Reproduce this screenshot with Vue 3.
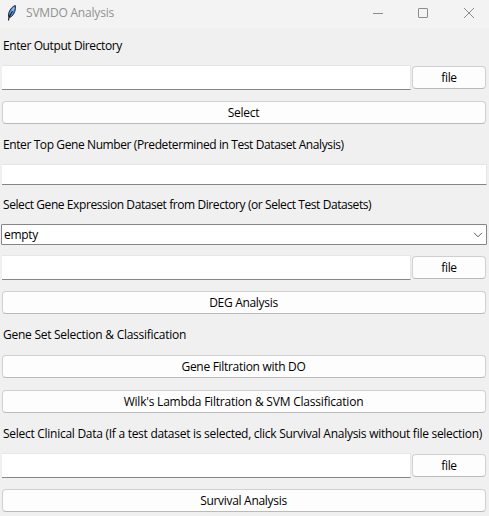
<script setup>
import { ref } from 'vue'

const outputDir = ref('')
const topGenes = ref('')
const expressionFile = ref('')
const clinicalFile = ref('')
</script>

<template>
  <div class="window">
    <header class="titlebar">
      <svg class="feather" width="12" height="18" viewBox="0 0 12 18">
        <path d="M9.300 1.500C6.500 2.300 3.800 5.500 2.900 8.600L2.400 12.200l1.200 1.400 2-1.200C8.400 10 10 5.600 9.300 1.500z" fill="#4d8fe0" stroke="#1c2836" stroke-width="1" />
        <path d="M8.200 3.500L4.600 9.500" stroke="#9cc8fa" stroke-width="1.300" />
        <path d="M6.500 7L3 13.200L2.500 16.500" fill="none" stroke="#151515" stroke-width="1.100" />
      </svg>
      <span class="title">SVMDO Analysis</span>
      <svg class="controls" width="104" height="12" viewBox="0 0 104 12" fill="none" stroke="#8c8c8c">
        <path d="M1 6.500H11" />
        <rect x="46.500" y="1.500" width="9" height="9" rx=".5" />
        <path d="M92 1L102 11M102 1L92 11" />
      </svg>
    </header>

    <main class="form">
      <div class="label l1"><span>Enter Output Directory</span></div>
      <div class="row">
        <input v-model="outputDir" class="entry" />
        <button class="btn file"><span>file</span></button>
      </div>
      <button class="btn after-entry"><span>Select</span></button>

      <div class="label l2"><span>Enter Top Gene Number (Predetermined in Test Dataset Analysis)</span></div>
      <input v-model="topGenes" class="entry short" />

      <div class="label l3"><span>Select Gene Expression Dataset from Directory (or Select Test Datasets)</span></div>
      <div class="combo">
        <span>empty</span>
        <svg width="10" height="6" viewBox="0 0 10 6" fill="none" stroke="#5a5a5a">
          <path d="M1 .8L5 4.800L9 .8" />
        </svg>
      </div>
      <div class="row after-combo">
        <input v-model="expressionFile" class="entry" />
        <button class="btn file"><span>file</span></button>
      </div>
      <button class="btn after-entry"><span>DEG Analysis</span></button>

      <div class="label l4"><span>Gene Set Selection &amp; Classification</span></div>
      <button class="btn"><span>Gene Filtration with DO</span></button>
      <button class="btn after-btn classify"><span>Wilk's Lambda Filtration &amp; SVM Classification</span></button>

      <div class="label l5"><span>Select Clinical Data (If a test dataset is selected, click Survival Analysis without file selection)</span></div>
      <div class="row">
        <input v-model="clinicalFile" class="entry" />
        <button class="btn file"><span>file</span></button>
      </div>
      <button class="btn after-entry"><span>Survival Analysis</span></button>
    </main>
  </div>
</template>

<style>
body {
  margin: 0;
  background: #f0f0f0;
}
</style>

<style scoped>
.window {
  width: 489px;
  height: 516px;
  overflow: hidden;
  background: #f0f0f0;
  color: #000;
  font: 12px/16px "Open Sans", "Noto Sans", sans-serif;
  letter-spacing: -0.3px;
}
.titlebar {
  display: flex;
  align-items: center;
  height: 28px;
  box-sizing: border-box;
  padding: 0 13px 3px 6px;
  background: #f3f3f3;
}
.title {
  margin-left: 8px;
  color: #919191;
  letter-spacing: -0.2px;
}
.controls {
  margin-left: auto;
}
.form {
  display: flex;
  flex-direction: column;
  padding: 0 3px 0 2px;
}
.label {
  height: 40px;
  box-sizing: border-box;
  padding: 13px 0 0 1px;
  white-space: nowrap;
}
.l1 {
  height: 37px;
  padding-top: 10px;
  letter-spacing: -0.4px;
}
.l2 {
  letter-spacing: -0.4px;
}
.l3 {
  height: 39px;
  padding-top: 12px;
  letter-spacing: -0.42px;
}
.l4 {
  height: 41px;
  letter-spacing: -0.26px;
}
.l5 {
  letter-spacing: -0.275px;
}
.row {
  display: flex;
  align-items: center;
  gap: 1px;
  width: 484px;
}
.entry {
  flex: 1;
  min-width: 0;
  height: 25px;
  box-sizing: border-box;
  border: 0 solid #e6e6e6;
  border-width: 1px 1px 1px 0;
  border-bottom-color: #868686;
  border-radius: 0 0 1px 0;
  padding: 0 3px;
  background: #fff;
  font: inherit;
  outline: none;
}
.short {
  flex: none;
  width: 485px;
  height: 21px;
}
.btn {
  display: flex;
  align-items: center;
  justify-content: center;
  width: 484px;
  height: 23px;
  box-sizing: border-box;
  padding: 0 1px 0 0;
  border: 1px solid #d0d0d0;
  border-bottom-color: #bababa;
  border-radius: 4px;
  background: #fdfdfd;
  color: inherit;
  font: inherit;
  letter-spacing: inherit;
}
.classify {
  letter-spacing: -0.21px;
}
.file {
  flex: none;
  width: 74px;
  padding: 0;
}
.after-entry {
  margin-top: 11px;
}
.after-btn {
  margin-top: 12px;
}
.after-combo {
  margin-top: 10px;
}
.combo {
  display: flex;
  align-items: center;
  justify-content: space-between;
  height: 21px;
  box-sizing: border-box;
  margin: 0 -1px;
  padding: 0 3px 0 2px;
  border: 1px solid #868686;
  border-radius: 1px;
  background: #fff;
}
</style>
